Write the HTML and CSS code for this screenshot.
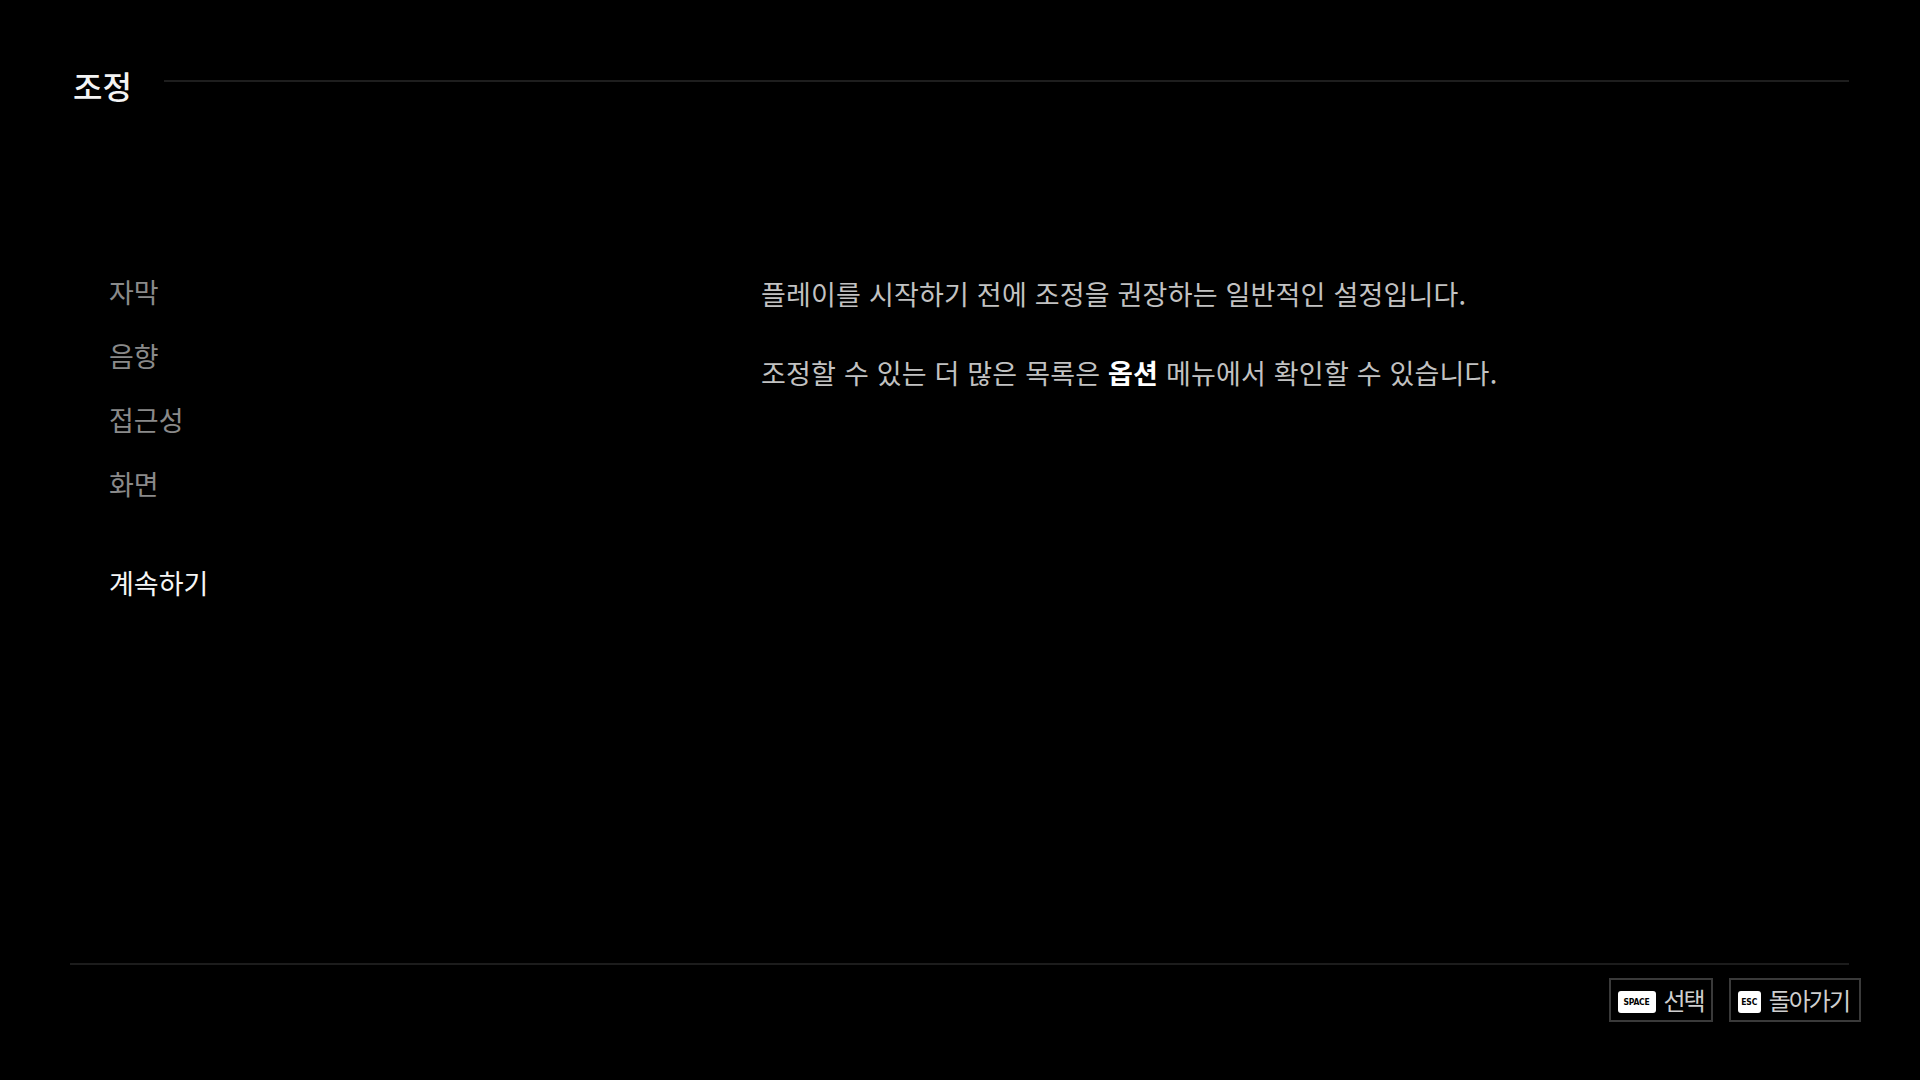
FILE: index.html
```html
<!DOCTYPE html>
<html lang="ko">
<head>
<meta charset="utf-8">
<title>조정</title>
<link rel="stylesheet" href="styles.css">
</head>
<body>
<div class="page">
  <header class="header">
    <h1 class="title">조정</h1>
    <div class="title-rule"></div>
  </header>
  <main class="main">
    <nav class="menu">
      <div class="menu-item">자막</div>
      <div class="menu-item">음향</div>
      <div class="menu-item">접근성</div>
      <div class="menu-item">화면</div>
      <div class="menu-item menu-continue">계속하기</div>
    </nav>
    <section class="desc">
      <p class="desc-line">플레이를 시작하기 전에 조정을 권장하는 일반적인 설정입니다.</p>
      <p class="desc-line">조정할 수 있는 더 많은 목록은 <strong class="em">옵션</strong> 메뉴에서 확인할 수 있습니다.</p>
    </section>
  </main>
  <footer class="footer">
    <div class="footer-rule"></div>
    <div class="hints">
      <div class="hint">
        <span class="key key-space">SPACE</span>
        <span class="hint-label">선택</span>
      </div>
      <div class="hint">
        <span class="key key-esc">ESC</span>
        <span class="hint-label">돌아가기</span>
      </div>
    </div>
  </footer>
</div>
</body>
</html>
```
FILE: styles.css
```css
* { box-sizing: border-box; }
html, body {
  margin: 0;
  padding: 0;
  background: #000;
}
body {
  font-family: "Noto Sans CJK KR", "Noto Sans", sans-serif;
  color: #c4c4c4;
}
.page {
  height: 1080px;
  display: flex;
  flex-direction: column;
}
.header {
  display: flex;
  align-items: center;
  padding: 65px 71px 0 73px;
}
.title {
  margin: 0;
  font-size: 32px;
  font-weight: 500;
  line-height: 40px;
  letter-spacing: 0;
  color: #f4f4f4;
}
.title-rule {
  flex: 1;
  height: 2px;
  background: #1e1e1e;
  margin-left: 32px;
  margin-top: -8px;
}
.main {
  flex: 1;
  display: flex;
  padding-top: 166px;
}
.menu {
  width: 761px;
  padding-left: 109px;
  padding-top: 1px;
  display: flex;
  flex-direction: column;
  gap: 24px;
}
.menu-item {
  font-size: 27px;
  line-height: 40px;
  height: 40px;
  letter-spacing: 0;
  color: #8a8a8a;
}
.menu-continue {
  margin-top: 35px;
  color: #f6f6f6;
}
.desc {
  padding-top: 3px;
}
.desc-line {
  margin: 0 0 39px 0;
  font-size: 27px;
  line-height: 40px;
  letter-spacing: 0.2px;
  color: #c2c2c2;
}
.em {
  color: #ffffff;
  font-weight: 700;
}
.footer {
  padding-bottom: 58px;
}
.footer-rule {
  height: 2px;
  background: #1c1c1c;
  margin: 0 71px 0 70px;
}
.hints {
  display: flex;
  justify-content: flex-end;
  gap: 16px;
  padding-right: 59px;
  margin-top: 13px;
}
.hint {
  height: 44px;
  border: 2px solid #3a3a3a;
  display: flex;
  align-items: center;
  padding: 0 7px;
  gap: 8px;
}
.hint:last-child { padding-right: 10px; }
.key {
  background: #ffffff;
  color: #000;
  border-radius: 3px;
  height: 22px;
  margin-top: 4px;
  display: flex;
  align-items: center;
  justify-content: center;
  font-family: "DejaVu Sans Condensed", "DejaVu Sans", sans-serif;
  font-weight: 700;
  font-size: 8.5px;
  letter-spacing: -0.2px;
}
.key-space { width: 38px; }
.key-esc { width: 23px; }
.hint-label {
  font-size: 24px;
  line-height: 30px;
  letter-spacing: -2px;
  color: #cfcfcf;
}
```
